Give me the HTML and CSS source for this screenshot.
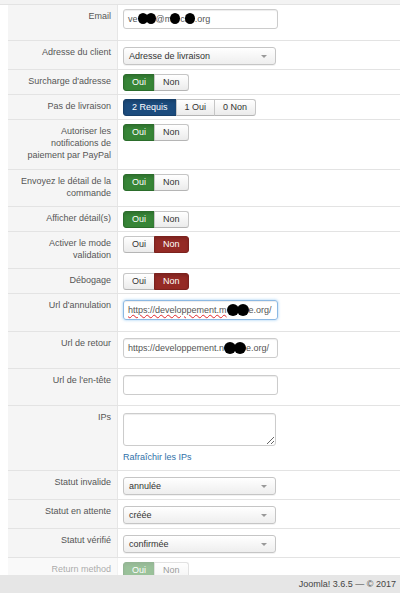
FILE: index.html
```html
<!DOCTYPE html>
<html lang="fr">
<head>
    <meta charset="UTF-8">
    <meta name="viewport" content="width=device-width, initial-scale=1.0">
    <title>Paramètres du paiement</title>
    <link rel="stylesheet" href="styles.css">
</head>
<body>
    <div class="top-strip"></div>
    <div class="form">
        <div class="row">
            <div class="label">Email</div>
            <div class="value">
                <div class="field field-email">ve<span class="blot"></span><span class="blot"></span>@m<span class="blot"></span>ci<span class="blot"></span>.org</div>
            </div>
        </div>
        <div class="row">
            <div class="label">Adresse du client</div>
            <div class="value"><div class="select">Adresse de livraison</div></div>
        </div>
        <div class="row">
            <div class="label">Surcharge d'adresse</div>
            <div class="value">
                <div class="toggle"><span class="on-green">Oui</span><span>Non</span></div>
            </div>
        </div>
        <div class="row">
            <div class="label">Pas de livraison</div>
            <div class="value">
                <div class="toggle"><span class="on-blue">2 Requis</span><span>1 Oui</span><span>0 Non</span></div>
            </div>
        </div>
        <div class="row">
            <div class="label label-tall">Autoriser les notifications de paiement par PayPal</div>
            <div class="value">
                <div class="toggle"><span class="on-green">Oui</span><span>Non</span></div>
            </div>
        </div>
        <div class="row">
            <div class="label">Envoyez le détail de la commande</div>
            <div class="value">
                <div class="toggle"><span class="on-green">Oui</span><span>Non</span></div>
            </div>
        </div>
        <div class="row">
            <div class="label">Afficher détail(s)</div>
            <div class="value">
                <div class="toggle"><span class="on-green">Oui</span><span>Non</span></div>
            </div>
        </div>
        <div class="row">
            <div class="label">Activer le mode validation</div>
            <div class="value">
                <div class="toggle"><span>Oui</span><span class="on-red">Non</span></div>
            </div>
        </div>
        <div class="row">
            <div class="label">Débogage</div>
            <div class="value">
                <div class="toggle"><span>Oui</span><span class="on-red">Non</span></div>
            </div>
        </div>
        <div class="row">
            <div class="label">Url d'annulation</div>
            <div class="value">
                <div class="field focused"><span class="spell">https://developpement.m</span><span class="blot wide"></span><span class="blot wide"></span>e.org/</div>
            </div>
        </div>
        <div class="row">
            <div class="label">Url de retour</div>
            <div class="value">
                <div class="field">https://developpement.n<span class="blot wide"></span><span class="blot wide"></span>e.org/</div>
            </div>
        </div>
        <div class="row">
            <div class="label">Url de l'en-tête</div>
            <div class="value"><div class="field"></div></div>
        </div>
        <div class="row">
            <div class="label">IPs</div>
            <div class="value">
                <textarea class="ips"></textarea>
                <a class="refresh" href="#">Rafraîchir les IPs</a>
            </div>
        </div>
        <div class="row">
            <div class="label">Statut invalide</div>
            <div class="value"><div class="select">annulée</div></div>
        </div>
        <div class="row">
            <div class="label">Statut en attente</div>
            <div class="value"><div class="select">créée</div></div>
        </div>
        <div class="row">
            <div class="label">Statut vérifié</div>
            <div class="value"><div class="select">confirmée</div></div>
        </div>
        <div class="row faded">
            <div class="label">Return method</div>
            <div class="value">
                <div class="toggle"><span class="on-green">Oui</span><span>Non</span></div>
            </div>
        </div>
    </div>
    <footer class="status">Joomla! 3.6.5 — © 2017</footer>
</body>
</html>
```

FILE: styles.css
```css
body {
    margin: 0;
    font-family: "Liberation Sans", Arial, sans-serif;
    font-size: 9px;
    color: #555;
    background: #fff;
    overflow: hidden;
}
.top-strip {
    height: 4px;
    background: #f3f3f3;
    border-bottom: 1px solid #e3e3e3;
}
.form {
    margin-left: 8px;
}
.row {
    display: grid;
    grid-template-columns: 110px 1fr;
    border-bottom: 1px solid #e3e3e3;
}
.label {
    background: #f5f5f5;
    border-right: 1px solid #e6e6e6;
    text-align: right;
    line-height: 12px;
    padding: 5px 6px 7px 8px;
}
.label-tall {
    padding-bottom: 8px;
}
.value {
    padding: 4px 0 3px 5px;
}

/* text inputs */
.field {
    box-sizing: border-box;
    width: 155px;
    height: 20px;
    margin: 2px 0 7px;
    padding: 0 4px;
    border: 1px solid #ccc;
    border-radius: 3px;
    box-shadow: inset 0 1px 1px rgba(0, 0, 0, 0.075);
    line-height: 18px;
    white-space: nowrap;
    overflow: hidden;
    color: #555;
}
.field-email {
    margin: 0 0 8px;
}
.focused {
    margin-bottom: 8px;
    border-color: #8db9e3;
    box-shadow: inset 0 1px 1px rgba(0, 0, 0, 0.075), 0 0 3px rgba(82, 168, 236, 0.6);
}
.spell {
    text-decoration: underline wavy #e0262b;
    text-decoration-thickness: 1px;
    text-underline-offset: 1px;
}
.blot {
    display: inline-block;
    width: 10px;
    height: 11px;
    border-radius: 50%;
    background: #000;
    vertical-align: -2px;
}
.blot.wide {
    width: 12px;
    height: 12px;
    vertical-align: -3px;
}
.blot + .blot {
    margin-left: -2px;
}

/* dropdowns */
.select {
    position: relative;
    box-sizing: border-box;
    width: 153px;
    height: 18px;
    margin: 2px 0 1px;
    padding: 0 5px;
    border: 1px solid #c5c5c5;
    border-radius: 3px;
    background: linear-gradient(#fff, #eee);
    box-shadow: 0 1px 0 rgba(0, 0, 0, 0.05);
    line-height: 16px;
    color: #333;
}
.select::after {
    content: "";
    position: absolute;
    right: 8px;
    top: 7px;
    border-left: 3px solid transparent;
    border-right: 3px solid transparent;
    border-top: 3px solid #999;
}

/* oui / non switches */
.toggle {
    display: inline-flex;
}
.toggle span {
    box-sizing: border-box;
    height: 17px;
    line-height: 15px;
    padding: 0 8px;
    border: 1px solid #c6c6c6;
    border-bottom-color: #b5b5b5;
    background: linear-gradient(#fff, #ebebeb);
    color: #333;
}
.toggle span + span {
    margin-left: -1px;
}
.toggle span:first-child {
    border-radius: 3px 0 0 3px;
}
.toggle span:last-child {
    border-radius: 0 3px 3px 0;
}
.toggle .on-green {
    background: #378537;
    border-color: #2b6d2b;
    color: #fff;
    box-shadow: inset 0 2px 3px rgba(0, 0, 0, 0.15);
}
.toggle .on-blue {
    background: #1c4c7e;
    border-color: #173f69;
    color: #fff;
    box-shadow: inset 0 2px 3px rgba(0, 0, 0, 0.15);
}
.toggle .on-red {
    background: #942a25;
    border-color: #7c221e;
    color: #fff;
    box-shadow: inset 0 2px 3px rgba(0, 0, 0, 0.15);
}

.ips {
    display: block;
    box-sizing: border-box;
    width: 153px;
    height: 33px;
    margin: 3px 0 0;
    border: 1px solid #ccc;
    border-radius: 3px;
    box-shadow: inset 0 1px 1px rgba(0, 0, 0, 0.075);
}
.refresh {
    display: block;
    margin: 5px 0 4px;
    line-height: 12px;
    color: #3071a9;
    text-decoration: none;
}
.faded {
    opacity: 0.5;
}

.status {
    position: fixed;
    left: 0;
    right: 0;
    bottom: 0;
    height: 18px;
    padding-right: 4px;
    background: #e6e6e6;
    text-align: right;
    line-height: 19px;
    color: #444;
}
```
